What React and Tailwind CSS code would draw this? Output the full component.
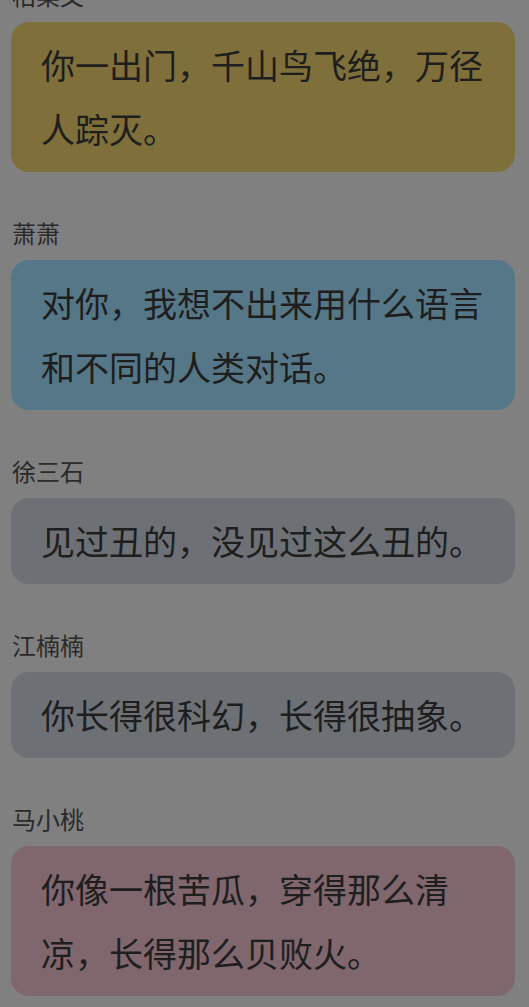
import React from "react";

const items = [
  { name: "柏菜文", text: "你一出门，千山鸟飞绝，万径人踪灭。", bg: "bg-[#7f6f3a]" },
  { name: "萧萧", text: "对你，我想不出来用什么语言和不同的人类对话。", bg: "bg-[#557787]" },
  { name: "徐三石", text: "见过丑的，没见过这么丑的。", bg: "bg-[#6d7176]" },
  { name: "江楠楠", text: "你长得很科幻，长得很抽象。", bg: "bg-[#6d7176]" },
  { name: "马小桃", text: "你像一根苦瓜，穿得那么清凉，长得那么贝败火。", bg: "bg-[#80666d]" },
];

export default function App() {
  return (
    <div
      className="w-[529px] h-[1007px] overflow-hidden bg-[#808080]"
      style={{ fontFamily: '"Noto Sans CJK SC", "Noto Sans", sans-serif' }}
    >
      <div className="-mt-[20px] flex flex-col">
        {items.map((it, i) => (
          <div key={i} className="flex flex-col mb-[46px]">
            <div className="pl-[12px] h-[30px] leading-[30px] text-[24px] text-[#2a2a2a]">
              {it.name}
            </div>
            <div
              className={`mt-[12px] ml-[11px] mr-[14px] rounded-[18px] ${it.bg} pl-[30px] pr-[30px] py-[11px] text-[34px] leading-[64px] text-[#1e1e1e]`}
            >
              {it.text}
            </div>
          </div>
        ))}
      </div>
    </div>
  );
}
